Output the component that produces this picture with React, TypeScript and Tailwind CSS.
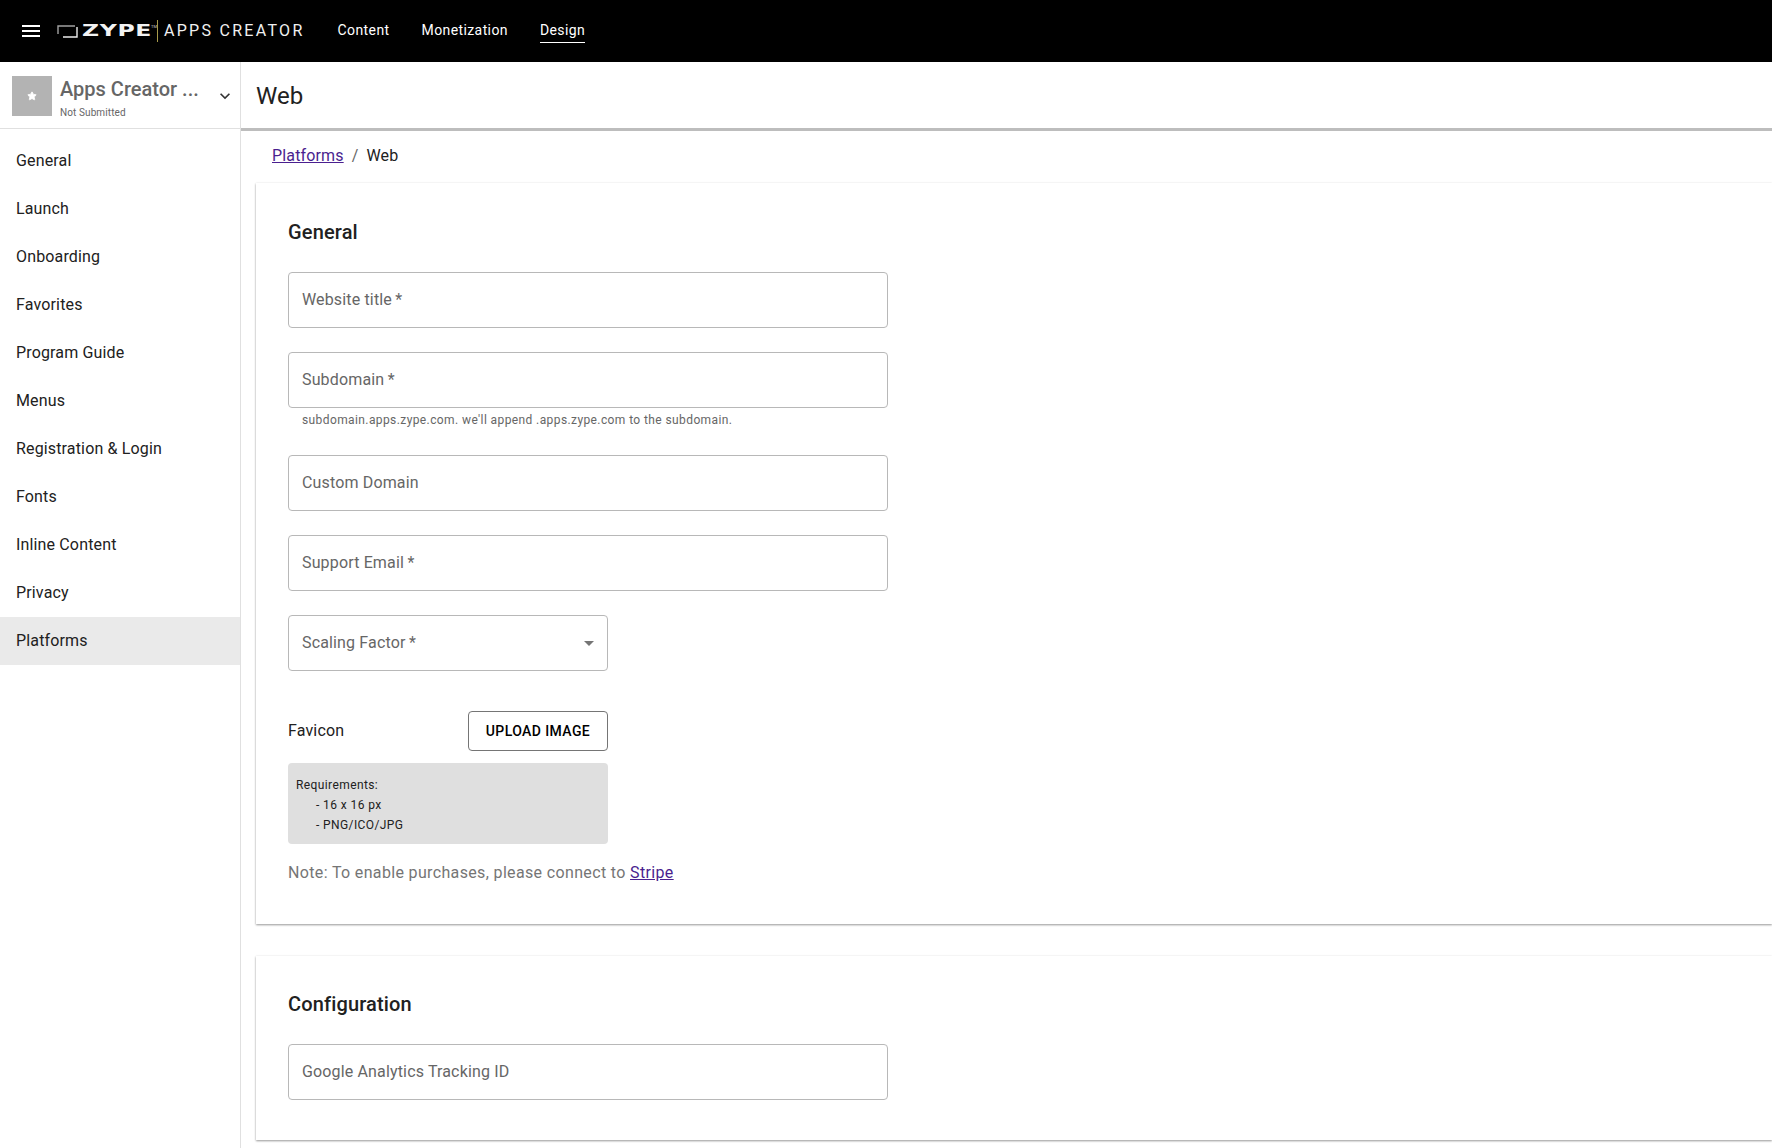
import { Star } from 'lucide-react';

const navItems = ['General', 'Launch', 'Onboarding', 'Favorites', 'Program Guide', 'Menus', 'Registration & Login', 'Fonts', 'Inline Content', 'Privacy', 'Platforms'];

function Field({ label, className = 'w-[600px]' }: { label: string; className?: string }) {
  return (
    <div className={`${className} h-14 shrink-0 rounded border border-[#b8b8b8] px-[13px] flex items-center text-base tracking-[0.15px] text-[#666]`}>
      {label}
    </div>
  );
}

export default function App() {
  return (
    <div className="flex h-[1148px] flex-col overflow-hidden bg-white font-['Roboto',sans-serif] text-[#212121]">
      {/* Top bar */}
      <header className="flex h-[62px] shrink-0 items-center bg-black text-white">
        <svg width="24" height="24" viewBox="0 0 24 24" fill="white" className="ml-[19px]">
          <path d="M3 18h18v-2H3v2zm0-5h18v-2H3v2zm0-5h18V6H3v2z" />
        </svg>
        <div className="ml-[14px] flex items-center">
          <svg width="21" height="13" viewBox="0 0 21 13" fill="none" className="mr-[4px]">
            <path d="M20 2V12H6" stroke="#ececec" strokeWidth="1.4" />
            <path d="M1 9V1H18" stroke="#a0a0a0" strokeWidth="1.4" />
          </svg>
          <span className="inline-block w-[68px] origin-left scale-x-[1.57] font-['DejaVu_Sans',sans-serif] text-[15px] leading-none font-bold tracking-[0.4px] text-[#f2f2f2]">ZYPE</span>
          <span className="mb-[9px] ml-px text-[4px] leading-none text-[#ccc]">TM</span>
          <div className="mr-[6px] h-[22px] w-px bg-[#a89a4a]" />
          <span className="text-base tracking-[2.3px] text-[#f0f0f0]">APPS CREATOR</span>
        </div>
        <nav className="ml-[33px] flex items-center gap-[32px] pb-[2px] text-sm tracking-[0.4px]">
          <span>Content</span>
          <span>Monetization</span>
          <span className="relative">
            Design
            <span className="absolute right-0 -bottom-[3px] left-0 h-px bg-white" />
          </span>
        </nav>
      </header>

      <div className="flex min-h-0 flex-1">
        {/* Sidebar */}
        <aside className="w-[241px] shrink-0 border-r border-[#e0e0e0]">
          <div className="flex h-[67px] items-center border-b border-[#e0e0e0] pt-[2px] pl-3">
            <div className="flex h-10 w-10 shrink-0 items-center justify-center bg-[#b3b3b3]">
              <Star size={10} fill="white" stroke="white" />
            </div>
            <div className="ml-2 w-[150px] min-w-0 pt-[2px]">
              <div className="text-xl leading-8 font-medium whitespace-nowrap text-[#666]">Apps Creator ...</div>
              <div className="text-[10px] leading-4 tracking-[0.1px] text-[#666]">Not Submitted</div>
            </div>
            <svg width="20" height="20" viewBox="0 0 24 24" fill="#333" className="ml-[5px]">
              <path d="M16.59 8.59L12 13.17 7.41 8.59 6 10l6 6 6-6z" />
            </svg>
          </div>
          <ul className="pt-[8px]">
            {navItems.map((item) => (
              <li
                key={item}
                className={`flex h-12 items-center pl-4 text-base tracking-[0.15px] ${item === 'Platforms' ? 'bg-[#eaeaea]' : ''}`}
              >
                {item}
              </li>
            ))}
          </ul>
        </aside>

        {/* Main */}
        <main className="min-w-0 flex-1">
          <div className="flex h-[69px] items-center border-b-[3px] border-[#bdbdbd] pt-[2px] pl-[15px] text-2xl">Web</div>
          <div className="flex h-[52px] items-center pb-[2px] pl-[31px] text-base tracking-[0.15px]">
            <a className="text-[#4a1f8f] underline">Platforms</a>
            <span className="mx-2 text-[#666]">/</span>
            <span>Web</span>
          </div>

          <section className="mb-8 ml-[15px] h-[741px] bg-white px-8 shadow-[0_1px_2px_rgba(0,0,0,0.4),0_0_3px_rgba(0,0,0,0.04)]">
            <h2 className="flex h-[89px] items-center pt-[9px] text-xl font-medium tracking-[0.15px]">General</h2>
            <div className="flex flex-col">
              <Field label={'Website title\u2009*'} />
              <div className="mt-6">
                <Field label={'Subdomain\u2009*'} />
              </div>
              <p className="mt-[5px] pl-[14px] text-xs leading-[14px] tracking-[0.4px] text-[#666]">
                subdomain.apps.zype.com. we'll append .apps.zype.com to the subdomain.
              </p>
              <div className="mt-[28px]">
                <Field label="Custom Domain" />
              </div>
              <div className="mt-6">
                <Field label={'Support Email\u2009*'} />
              </div>
              <div className="relative mt-6 w-80">
                <Field label={'Scaling Factor\u2009*'} className="w-80" />
                <span className="absolute top-[26px] right-[14px] h-0 w-0 border-x-[5px] border-t-[5px] border-x-transparent border-t-[#757575]" />
              </div>
              <div className="mt-10 flex w-80 items-center justify-between">
                <span className="text-base tracking-[0.15px]">Favicon</span>
                <button className="h-10 w-[140px] rounded border border-[#757575] text-sm font-medium tracking-[0.4px] text-black">
                  UPLOAD IMAGE
                </button>
              </div>
              <div className="mt-3 h-[81px] w-80 rounded bg-[#dfdfdf] pt-[12px] pl-2 text-xs leading-5 tracking-[0.4px]">
                <div>Requirements:</div>
                <div className="pl-[20px]">- 16 x 16 px</div>
                <div className="pl-[20px]">- PNG/ICO/JPG</div>
              </div>
              <p className="mt-[17px] text-base leading-6 tracking-[0.35px] text-[#757575]">
                Note: To enable purchases, please connect to <a className="text-[#4a1f8f] underline">Stripe</a>
              </p>
            </div>
          </section>

          <section className="ml-[15px] h-[184px] bg-white px-8 shadow-[0_1px_2px_rgba(0,0,0,0.4),0_0_3px_rgba(0,0,0,0.04)]">
            <h2 className="flex h-[88px] items-center pt-[8px] text-xl font-medium tracking-[0.15px]">Configuration</h2>
            <Field label="Google Analytics Tracking ID" />
          </section>
        </main>
      </div>
    </div>
  );
}
